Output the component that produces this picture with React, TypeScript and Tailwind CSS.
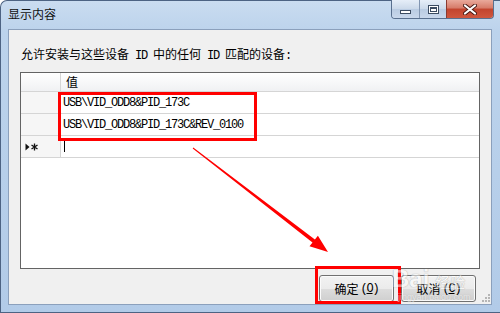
import React from "react";

const cjk = "font-['Noto_Sans_CJK_SC',sans-serif]";
const mono = "font-['Liberation_Mono',monospace]";

function WinButton({ label, accel }: { label: string; accel: string }) {
  return (
    <div className="w-[75px] h-[27px] rounded-[3px] border border-[#707070] bg-[linear-gradient(#f2f2f2_0%,#ebebeb_50%,#dddddd_50%,#cfcfcf_100%)] shadow-[inset_0_0_0_1px_#fbfbfb] flex items-center justify-center text-black">
      <span className={`${cjk} text-[12px] leading-[16px]`}>{label}</span>
      <span className={`${mono} text-[12px] tracking-[-1.2px] leading-[16px] ml-[2px]`}>
        (<span className="underline">{accel}</span>)
      </span>
    </div>
  );
}

function DataRow({ text }: { text: string }) {
  return (
    <div className="h-[22px] flex border-b border-[#d5d5d5] shrink-0">
      <div className="w-[40px] border-r border-[#d5d5d5] bg-[#f6f6f6]" />
      <div className={`flex-1 pl-[2px] flex items-center ${mono} text-[12px] tracking-[-1.2px] text-black`}>{text}</div>
    </div>
  );
}

export default function App() {
  return (
    <div className="relative w-[500px] h-[313px] overflow-hidden bg-white">
      <div className="w-[500px] h-[313px] flex flex-col border-l border-t border-b border-[#4d6383] rounded-tl-[7px] bg-[linear-gradient(180deg,#cadcf0_0px,#bcd3ec_30px,#b2cbe8_100%)]">
        {/* title bar */}
        <div className="h-[28px] shrink-0 flex">
          <div className={`pl-[7px] pt-[5px] ${cjk} text-[12px] leading-[16px] text-[#111]`}>显示内容</div>
          <div className="ml-auto mr-[6px] -mt-px h-[19px] flex rounded-b-[4px] border border-t-0 border-[#59708f] overflow-hidden">
            <div className="w-[28px] h-full border-r border-[#8296b2] bg-[linear-gradient(#e6eef8,#cbd9ea_50%,#b9cbe2_50%,#c9d8ec)] flex items-end justify-center pb-[4px]">
              <div className="w-[11px] h-[4px] border border-[#3c4c62] bg-white" />
            </div>
            <div className="w-[27px] h-full border-r border-[#8a3a30] bg-[linear-gradient(#e6eef8,#cbd9ea_50%,#b9cbe2_50%,#c9d8ec)] flex items-center justify-center">
              <div className="w-[11px] h-[9px] border border-[#3c4c62] bg-white flex items-center justify-center">
                <div className="w-[7px] h-[5px] border border-[#3c4c62] border-t-2 bg-white" />
              </div>
            </div>
            <div className="w-[46px] h-full bg-[linear-gradient(#e9a99b,#d67a68_45%,#c2442e_50%,#d0573e_100%)] flex items-center justify-center">
              <svg width="14" height="11" viewBox="0 0 14 11">
                <path d="M2 1.5 L12 9.5 M12 1.5 L2 9.5" stroke="#4a1a14" strokeWidth="4" strokeLinecap="round" />
                <path d="M2 1.5 L12 9.5 M12 1.5 L2 9.5" stroke="#ffffff" strokeWidth="2.2" strokeLinecap="round" />
              </svg>
            </div>
          </div>
        </div>

        {/* client area */}
        <div className="ml-[7px] w-[484px] h-[276px] shrink-0 border border-[#8ba0bc] bg-[#f0f0f0] flex flex-col">
          <div className={`mt-[16px] ml-[12px] h-[16px] leading-[16px] ${cjk} text-[12px] text-black whitespace-pre`}>
            允许安装与这些设备<span className={`${mono} tracking-[-1.2px]`}> ID </span>中的任何<span className={`${mono} tracking-[-1.2px]`}> ID </span>匹配的设备<span className={`${mono} tracking-[-1.2px]`}>:</span>
          </div>

          {/* grid */}
          <div className="mt-[10px] mx-[11px] h-[197px] shrink-0 border border-[#646464] bg-white flex flex-col">
            <div className="h-[19px] shrink-0 flex border-b border-[#d5d5d5] bg-[linear-gradient(#ffffff,#f0f1f3)]">
              <div className="w-[40px] border-r border-[#d5d5d5]" />
              <div className={`flex-1 pl-[5px] flex items-center ${cjk} text-[12px] text-black`}>值</div>
            </div>
            <DataRow text="USB\VID_ODD8&PID_173C" />
            <DataRow text="USB\VID_ODD8&PID_173C&REV_0100" />
            <div className="h-[22px] flex border-b border-[#d5d5d5] shrink-0">
              <div className="w-[40px] border-r border-[#d5d5d5] bg-[#f6f6f6] flex items-center pl-[4px]">
                <svg width="14" height="8" viewBox="0 0 14 8">
                  <path d="M0.5 0.5 L4.5 4 L0.5 7.5 Z" fill="#111" />
                  <path d="M9.5 0.5 V7.5 M6.5 2 L12.5 6 M12.5 2 L6.5 6" stroke="#111" strokeWidth="1.3" />
                </svg>
              </div>
              <div className="flex-1 flex items-center">
                <div className="ml-[3px] w-px h-[11px] bg-black" />
              </div>
            </div>
            <div className="flex-1" />
          </div>

          {/* buttons */}
          <div className="mt-[6px] h-[27px] shrink-0 flex justify-end gap-[7px] pr-[15px]">
            <WinButton label="确定" accel="O" />
            <WinButton label="取消" accel="C" />
          </div>
        </div>
      </div>

      {/* resize grip */}
      <svg className="absolute left-[482px] top-[294px]" width="9" height="9" viewBox="0 0 9 9">
        <rect x="6" y="0" width="2" height="2" fill="#b5b5b5" />
        <rect x="3" y="3" width="2" height="2" fill="#b5b5b5" />
        <rect x="6" y="3" width="2" height="2" fill="#b5b5b5" />
        <rect x="0" y="6" width="2" height="2" fill="#b5b5b5" />
        <rect x="3" y="6" width="2" height="2" fill="#b5b5b5" />
        <rect x="6" y="6" width="2" height="2" fill="#b5b5b5" />
      </svg>

      {/* annotations */}
      <div className="absolute left-[58px] top-[92px] w-[199px] h-[49px] border-[3px] border-[#ff0000]" />
      <div className="absolute left-[315px] top-[266px] w-[86px] h-[38px] border-[3px] border-[#ff0000]" />
      <svg className="absolute left-0 top-0 pointer-events-none" width="500" height="313" viewBox="0 0 500 313">
        <polygon
          points="192.7,148.4 312.5,242.6 309.5,246.3 328,252 317.9,235.8 314.9,239.4 193.3,147.6"
          fill="#ff0000"
        />
      </svg>

      {/* watermark */}
      <div className="absolute left-[392px] top-[266px] flex items-end opacity-50 pointer-events-none">
        <span className="font-['Liberation_Sans',sans-serif] font-bold text-[24px] leading-[26px] text-white [text-shadow:0_0_1px_#888,0_0_1px_#888]">Bai</span>
        <span className={`${cjk} text-[15px] leading-[20px] text-white ml-[6px] [text-shadow:0_0_1px_#888,0_0_1px_#888]`}>经验</span>
      </div>
      <div className="absolute left-[398px] top-[292px] font-['Liberation_Sans',sans-serif] text-[9px] leading-[10px] text-white opacity-50 [text-shadow:0_0_1px_#888]">jingyan.baidu.com</div>
    </div>
  );
}
